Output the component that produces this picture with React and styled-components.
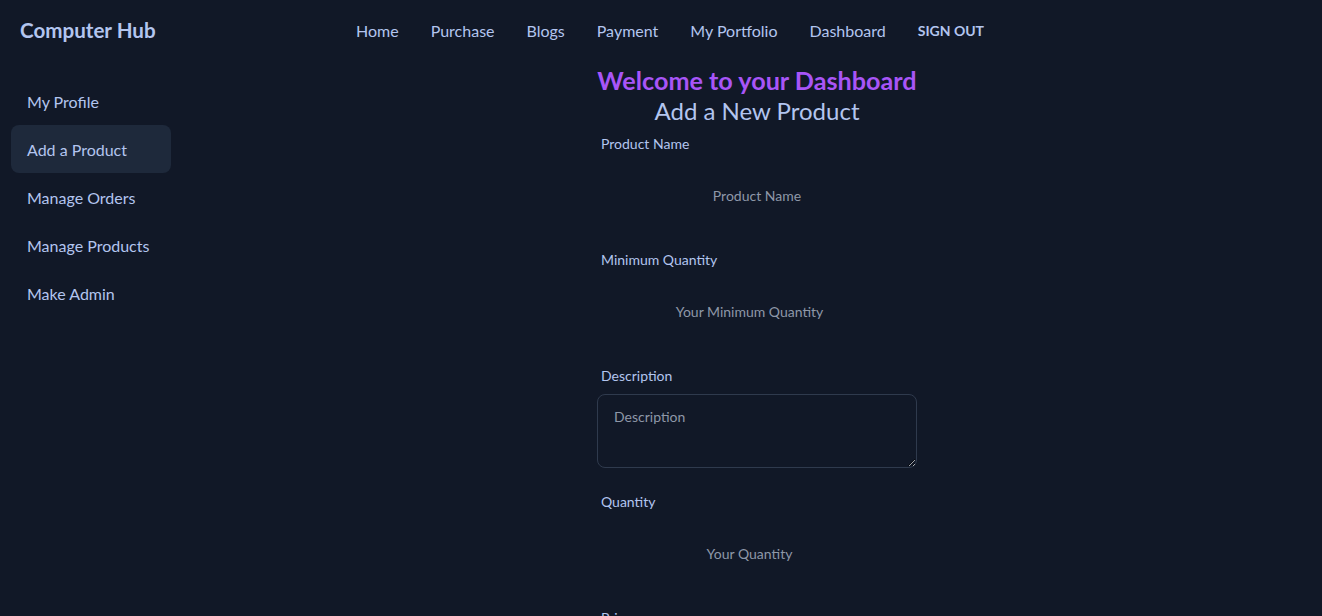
import styled, { createGlobalStyle } from 'styled-components';

const GlobalStyle = createGlobalStyle`
  html, body {
    margin: 0;
    background: #111827;
    color: #b3c5ef;
    font-family: 'Lato', 'Noto Sans', sans-serif;
  }
  * {
    box-sizing: border-box;
  }
`;

const navLinks = ['Home', 'Purchase', 'Blogs', 'Payment', 'My Portfolio', 'Dashboard'];
const sideLinks = ['My Profile', 'Add a Product', 'Manage Orders', 'Manage Products', 'Make Admin'];

const fields = [
  { label: 'Product Name', placeholder: 'Product Name', type: 'text' },
  { label: 'Minimum Quantity', placeholder: 'Your Minimum Quantity', type: 'number' },
  { label: 'Description', placeholder: 'Description', area: true },
  { label: 'Quantity', placeholder: 'Your Quantity', type: 'number' },
  { label: 'Price', placeholder: 'Price', type: 'number' }
];

export default function App() {
  return (
    <Page>
      <GlobalStyle />
      <Navbar>
        <Brand>Computer Hub</Brand>
        <NavMenu>
          {navLinks.map((link) => (
            <NavItem key={link}>{link}</NavItem>
          ))}
          <SignOut>SIGN OUT</SignOut>
        </NavMenu>
      </Navbar>
      <Layout>
        <Sidebar>
          {sideLinks.map((link) => (
            <SideItem key={link} $active={link === 'Add a Product'}>
              {link}
            </SideItem>
          ))}
        </Sidebar>
        <Content>
          <Welcome>Welcome to your Dashboard</Welcome>
          <Title>Add a New Product</Title>
          <Form>
            {fields.map((field) => (
              <Field key={field.label}>
                <Label>{field.label}</Label>
                {field.area ? (
                  <TextArea placeholder={field.placeholder} />
                ) : (
                  <Input type={field.type} placeholder={field.placeholder} />
                )}
              </Field>
            ))}
          </Form>
        </Content>
      </Layout>
    </Page>
  );
}

const Page = styled.div`
  min-height: 100vh;
`;

const Navbar = styled.header`
  display: flex;
  align-items: center;
  height: 60px;
  padding: 0 20px;
`;

const Brand = styled.div`
  font-size: 20.6px;
  font-weight: 700;
  width: 320px;
`;

const NavMenu = styled.nav`
  display: flex;
  align-items: center;
`;

const NavItem = styled.a`
  padding: 8px 16px;
  font-size: 16px;
  cursor: pointer;
`;

const SignOut = styled.button`
  background: none;
  border: none;
  color: inherit;
  font-family: inherit;
  font-size: 14px;
  font-weight: 700;
  padding: 8px 16px;
  cursor: pointer;
`;

const Layout = styled.div`
  display: grid;
  grid-template-columns: 192px 1fr;
`;

const Sidebar = styled.aside`
  display: flex;
  flex-direction: column;
  padding: 17px 21px 0 11px;
`;

const SideItem = styled.a`
  display: flex;
  align-items: center;
  height: 48px;
  padding: 0 16px;
  border-radius: 8px;
  font-size: 16px;
  background: ${(p) => (p.$active ? '#1e293b' : 'transparent')};
  cursor: pointer;
`;

const Content = styled.main`
  display: flex;
  flex-direction: column;
  align-items: center;
  padding-top: 4px;
`;

const Welcome = styled.h2`
  margin: 0;
  font-size: 25.2px;
  line-height: 32px;
  font-weight: 700;
  color: #a855f7;
`;

const Title = styled.h3`
  margin: -1px 0 0;
  font-size: 24px;
  line-height: 32px;
  font-weight: 400;
`;

const Form = styled.form`
  width: 320px;
  display: flex;
  flex-direction: column;
  margin-top: 1px;
`;

const Field = styled.div`
  display: flex;
  flex-direction: column;
  margin-bottom: 14px;
`;

const Label = styled.label`
  padding: 6px 4px;
  font-size: 14px;
  line-height: 20px;
`;

const Input = styled.input`
  height: 70px;
  background: transparent;
  border: none;
  outline: none;
  text-align: center;
  font-family: inherit;
  font-size: 14px;
  color: #b3c5ef;

  &::placeholder {
    color: #8e97a8;
  }
`;

const TextArea = styled.textarea`
  margin-top: 2px;
  height: 74px;
  padding: 12px 16px;
  background: transparent;
  border: 1px solid #2f3a4d;
  border-radius: 8px;
  outline: none;
  font-family: inherit;
  font-size: 14px;
  line-height: 20px;
  color: #b3c5ef;
  margin-bottom: 4px;

  &::placeholder {
    color: #8e97a8;
  }
`;
